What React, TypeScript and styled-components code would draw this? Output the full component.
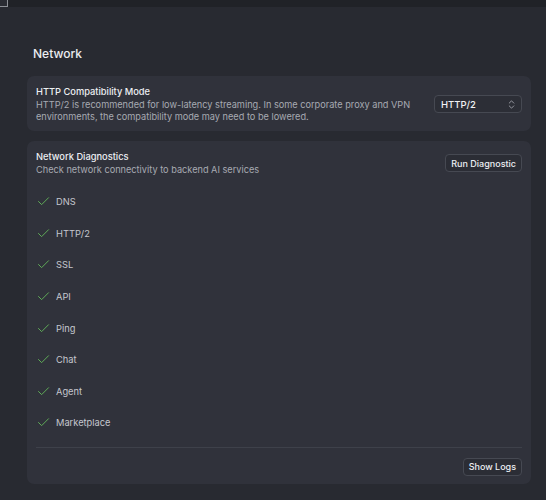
import React from 'react';
import styled, { createGlobalStyle } from 'styled-components';
import { Check, ChevronsUpDown } from 'lucide-react';

const GlobalStyle = createGlobalStyle`
  html, body {
    margin: 0;
    padding: 0;
    background: #282a31;
  }
  body {
    font-family: Inter, "Noto Sans", "Liberation Sans", sans-serif;
    -webkit-font-smoothing: antialiased;
  }
`;

const checks = ['DNS', 'HTTP/2', 'SSL', 'API', 'Ping', 'Chat', 'Agent', 'Marketplace'];

const App: React.FC = () => {
  return (
    <>
      <GlobalStyle />
      <Page>
        <TopBar>
          <TabStub />
        </TopBar>
        <Content>
          <SectionTitle>Network</SectionTitle>
          <Card>
            <Row>
              <TextBlock>
                <CardTitle>HTTP Compatibility Mode</CardTitle>
                <CardDesc>
                  HTTP/2 is recommended for low-latency streaming. In some corporate proxy and VPN
                  environments, the compatibility mode may need to be lowered.
                </CardDesc>
              </TextBlock>
              <Select>
                <span>HTTP/2</span>
                <ChevronsUpDown size={11} strokeWidth={1.6} color="#b9bbc2" />
              </Select>
            </Row>
          </Card>
          <Card>
            <Row>
              <TextBlock>
                <CardTitle>Network Diagnostics</CardTitle>
                <CardDesc>Check network connectivity to backend AI services</CardDesc>
              </TextBlock>
              <Button>Run Diagnostic</Button>
            </Row>
            <CheckList>
              {checks.map((name) => (
                <CheckItem key={name}>
                  <Check size={15} strokeWidth={1.5} color="#62b35a" />
                  <span>{name}</span>
                </CheckItem>
              ))}
            </CheckList>
            <Footer>
              <Button>Show Logs</Button>
            </Footer>
          </Card>
        </Content>
      </Page>
    </>
  );
};

const Page = styled.div`
  min-height: 500px;
  background: #282a31;
`;

const TopBar = styled.div`
  height: 7px;
  background: #202227;
  display: flex;
`;

const TabStub = styled.div`
  width: 7px;
  height: 6px;
  border-right: 1px solid #8d9096;
  border-bottom: 1px solid #8d9096;
  background: #2a2c33;
`;

const Content = styled.div`
  padding: 39px 15px 0 27px;
  display: flex;
  flex-direction: column;
`;

const SectionTitle = styled.h2`
  margin: 0 0 14px 6px;
  font-size: 12px;
  line-height: 16px;
  font-weight: 500;
  color: #eceef2;
`;

const Card = styled.div`
  background: #30323b;
  border-radius: 7px;
  padding: 9px 9px 8px 9px;
  margin-bottom: 10px;
`;

const Row = styled.div`
  display: flex;
  align-items: center;
  justify-content: space-between;
  gap: 4px;
`;

const TextBlock = styled.div`
  display: flex;
  flex-direction: column;
  gap: 1px;
  min-width: 0;
`;

const CardTitle = styled.div`
  font-size: 9.3px;
  line-height: 13px;
  font-weight: 500;
  color: #eceef2;
`;

const CardDesc = styled.div`
  font-size: 9.2px;
  line-height: 12px;
  color: #a7aab2;
`;

const Select = styled.div`
  box-sizing: border-box;
  width: 88px;
  height: 18px;
  flex-shrink: 0;
  border: 1px solid #464952;
  border-radius: 4px;
  background: #2c2e36;
  display: flex;
  align-items: center;
  justify-content: space-between;
  padding: 0 4px 0 6px;
  font-size: 9.5px;
  color: #f0f1f4;
  font-weight: 500;
`;

const Button = styled.button`
  box-sizing: border-box;
  height: 18px;
  padding: 0 5px;
  border: 1px solid #464952;
  border-radius: 4px;
  background: #2b2d35;
  color: #eceef2;
  font-family: inherit;
  font-size: 9px;
  font-weight: 500;
  flex-shrink: 0;
`;

const CheckList = styled.div`
  display: flex;
  flex-direction: column;
  margin-top: 10px;
  padding-bottom: 8px;
  border-bottom: 1px solid #3e414a;
`;

const CheckItem = styled.div`
  height: 31.6px;
  display: flex;
  align-items: center;
  gap: 5px;
  font-size: 9.3px;
  color: #c5c7ce;
`;

const Footer = styled.div`
  display: flex;
  justify-content: flex-end;
  padding-top: 10px;
`;

export default App;
